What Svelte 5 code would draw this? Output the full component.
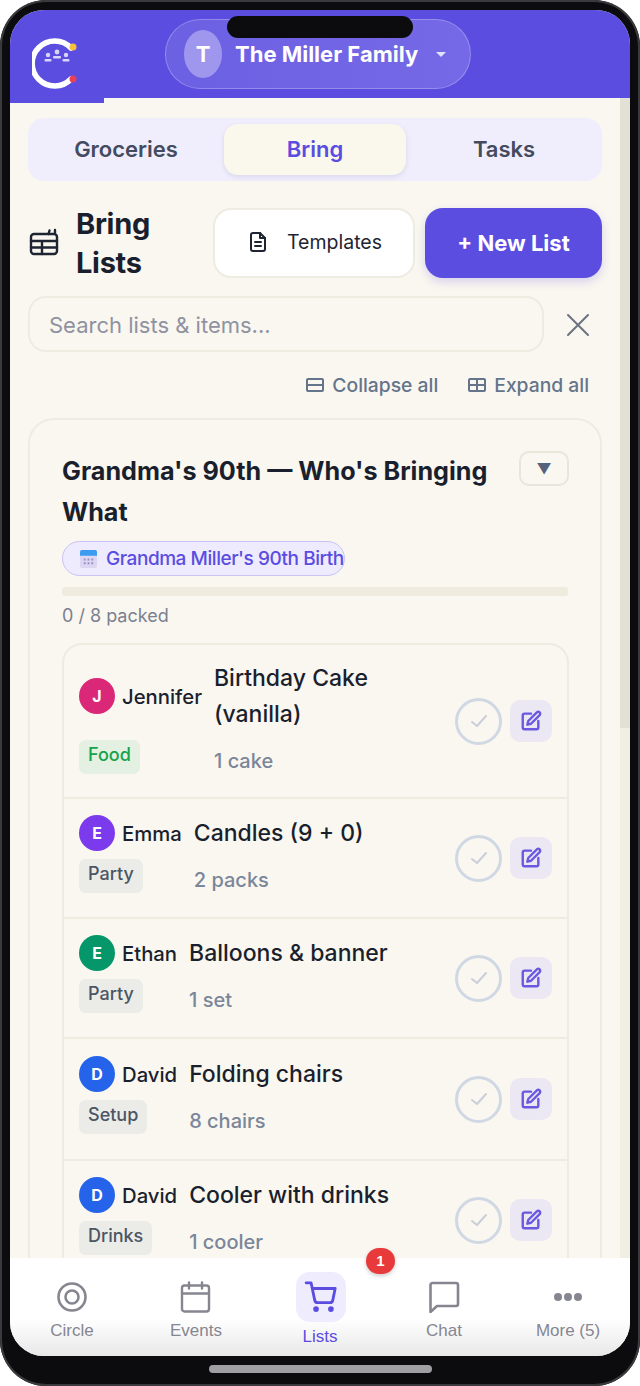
<script>
  const items = [
    { who: 'Jennifer', letter: 'J', color: '#db2777', tag: 'Food', food: true, title: 'Birthday Cake (vanilla)', qty: '1 cake' },
    { who: 'Emma', letter: 'E', color: '#7c3aed', tag: 'Party', title: 'Candles (9 + 0)', qty: '2 packs' },
    { who: 'Ethan', letter: 'E', color: '#059669', tag: 'Party', title: 'Balloons & banner', qty: '1 set' },
    { who: 'David', letter: 'D', color: '#2563eb', tag: 'Setup', title: 'Folding chairs', qty: '8 chairs' },
    { who: 'David', letter: 'D', color: '#2563eb', tag: 'Drinks', title: 'Cooler with drinks', qty: '1 cooler' }
  ];
</script>

<div class="phone">
  <div class="notch"></div>
  <div class="screen">
    <header class="top">
      <svg class="logo" width="48" height="52" viewBox="0 0 48 52" fill="none">
        <path d="M39 10A22.500 22.500 0 1 0 39 41" stroke="#fff" stroke-width="5.500" stroke-linecap="round" transform="translate(0 1)" />
        <circle cx="41" cy="10" r="3.500" fill="#f6c23e" />
        <circle cx="41" cy="42" r="3.500" fill="#e8405a" />
        <g fill="#d9d5f8">
          <circle cx="16" cy="18" r="2.200" /><rect x="12.500" y="22" width="7" height="2.500" rx="1" />
          <circle cx="25" cy="15" r="2.400" /><rect x="21" y="19" width="8" height="2.500" rx="1" />
          <circle cx="34" cy="18" r="2.200" /><rect x="30.500" y="22" width="7" height="2.500" rx="1" />
        </g>
      </svg>
      <button class="family">
        <span class="family-avatar">T</span>
        <span class="family-name">The Miller Family</span>
        <span class="caret"></span>
      </button>
    </header>

    <div class="body">
      <main class="scroll">
        <div class="loadbar"></div>
        <div class="content">
          <nav class="tabs">
            <button class="tab">Groceries</button>
            <button class="tab active">Bring</button>
            <button class="tab">Tasks</button>
          </nav>

          <div class="heading">
            <svg class="list-icon" width="30" height="30" viewBox="0 0 30 30" fill="none" stroke="#1f2433" stroke-width="2.400" stroke-linecap="round" stroke-linejoin="round">
              <rect x="2" y="6" width="26" height="20" rx="3" />
              <path d="M2 13h26M2 19.500h26M13 13v13M20.500 2.500l-1 3.500M26 2v3" />
            </svg>
            <h1>Bring Lists</h1>
            <button class="btn-templates">
              <svg width="20" height="22" viewBox="0 0 20 22" fill="none" stroke="#1f2433" stroke-width="2" stroke-linecap="round" stroke-linejoin="round">
                <path d="M12 2H5a2 2 0 0 0-2 2v14a2 2 0 0 0 2 2h10a2 2 0 0 0 2-2V7z" />
                <path d="M12 2v5h5M7 11h6M7 15h6" />
              </svg>
              Templates
            </button>
            <button class="btn-new">+ New List</button>
          </div>

          <div class="search-row">
            <div class="search">Search lists &amp; items...</div>
            <svg width="24" height="24" viewBox="0 0 24 24" fill="none" stroke="#6b7280" stroke-width="2" stroke-linecap="round">
              <path d="M2 2l20 20M22 2L2 22" />
            </svg>
          </div>

          <div class="actions">
            <span class="act">
              <svg width="18" height="14" viewBox="0 0 18 14" fill="none" stroke="#64748b" stroke-width="2">
                <rect x="1" y="1" width="16" height="12" rx="1" /><path d="M1 7h16" />
              </svg>
              Collapse all
            </span>
            <span class="act">
              <svg width="18" height="14" viewBox="0 0 18 14" fill="none" stroke="#64748b" stroke-width="2">
                <rect x="1" y="1" width="16" height="12" rx="1" /><path d="M1 7h16M9 1v12" />
              </svg>
              Expand all
            </span>
          </div>

          <section class="card">
            <div class="card-head">
              <h2>Grandma's 90th — Who's Bringing What</h2>
              <button class="toggle">▼</button>
            </div>
            <div class="event">
              <svg width="17" height="18" viewBox="0 0 18 19">
                <rect width="18" height="19" rx="2" fill="#ddd6f3" />
                <path d="M0 6V2a2 2 0 0 1 2-2h14a2 2 0 0 1 2 2v4z" fill="#3b9bf0" />
                <path d="M4 9h2v2H4zM8 9h2v2H8zM12 9h2v2h-2zM4 13h2v2H4zM8 13h2v2H8zM12 13h2v2h-2z" fill="#9a90c4" />
              </svg>
              <span class="event-name">Grandma Miller's 90th Birth</span>
            </div>
            <div class="progress"></div>
            <p class="packed">0 / 8 packed</p>

            <div class="rows">
              {#each items as item}
                <div class="row">
                  <div class="info">
                    <div class="person">
                      <span class="avatar" style="background:{item.color}">{item.letter}</span>
                      <span class="who">{item.who}</span>
                    </div>
                    <div class="title">{item.title}</div>
                    <div><span class="tag" class:food={item.food}>{item.tag}</span></div>
                    <div class="qty">{item.qty}</div>
                  </div>
                  <button class="check" aria-label="Mark packed">
                    <svg width="20" height="16" viewBox="0 0 20 16" fill="none" stroke="#c9ced8" stroke-width="2" stroke-linecap="round" stroke-linejoin="round">
                      <path d="M3 9l5 4 9-10" />
                    </svg>
                  </button>
                  <button class="edit" aria-label="Edit">
                    <svg width="22" height="22" viewBox="0 0 24 24" fill="none" stroke="#6a58e0" stroke-width="2.600" stroke-linecap="round" stroke-linejoin="round">
                      <path d="M12 4H5a2 2 0 0 0-2 2v13a2 2 0 0 0 2 2h13a2 2 0 0 0 2-2v-7" />
                      <path d="M18.400 2.600a2.100 2.100 0 0 1 3 3L12 15l-4 1 1-4z" />
                    </svg>
                  </button>
                </div>
              {/each}
            </div>
          </section>
        </div>
      </main>
      <div class="scrollbar"><div class="thumb"></div></div>
    </div>

    <footer class="nav">
      <div class="nav-item">
        <svg width="32" height="32" viewBox="0 0 32 32" fill="none" stroke="#868691" stroke-width="2.600">
          <circle cx="16" cy="16" r="13.500" /><circle cx="16" cy="16" r="6.500" />
        </svg>
        <span>Circle</span>
      </div>
      <div class="nav-item">
        <svg width="32" height="32" viewBox="0 0 32 32" fill="none" stroke="#868691" stroke-width="2.400" stroke-linecap="round" stroke-linejoin="round">
          <rect x="2" y="4.500" width="27" height="26" rx="2.500" /><path d="M2 12.500h27M9 1.500v6M22 1.500v6" />
        </svg>
        <span>Events</span>
      </div>
      <div class="nav-item current">
        <div class="cart-box">
          <svg width="34" height="34" viewBox="0 0 24 24" fill="none" stroke="#5a4de0" stroke-width="2" stroke-linecap="round" stroke-linejoin="round">
            <circle cx="8.500" cy="20.500" r="1" fill="#5a4de0" /><circle cx="19" cy="20.500" r="1" fill="#5a4de0" />
            <path d="M1.500 2h3.500l2.600 12.400a2 2 0 0 0 2 1.600h8.700a2 2 0 0 0 2-1.600L22 6H6" />
          </svg>
        </div>
        <span>Lists</span>
        <b class="badge">1</b>
      </div>
      <div class="nav-item">
        <svg width="32" height="32" viewBox="0 0 32 32" fill="none" stroke="#868691" stroke-width="2.600" stroke-linejoin="round">
          <path d="M30 23a2 2 0 0 1-2 2H9l-6.500 6V4a2 2 0 0 1 2-2H28a2 2 0 0 1 2 2z" />
        </svg>
        <span>Chat</span>
      </div>
      <div class="nav-item">
        <svg width="32" height="32" viewBox="0 0 32 32" fill="#868691">
          <circle cx="6" cy="16" r="4" /><circle cx="16" cy="16" r="4" /><circle cx="26" cy="16" r="4" />
        </svg>
        <span>More (5)</span>
      </div>
    </footer>
  </div>
  <div class="home"></div>
</div>

<style>
  :global(body) {
    background: #fff;
  }

  .phone {
    position: relative;
    box-sizing: border-box;
    width: 640px;
    height: 1386px;
    padding: 10px 10px 30px;
    background: #0c0c0f;
    border-radius: 46px;
    box-shadow: inset 0 0 0 2px #3a3a3e;
    font-family: Inter, "Liberation Sans", sans-serif;
    color: #1a1f2e;
  }

  .notch {
    position: absolute;
    top: 16px;
    left: 227px;
    width: 186px;
    height: 22px;
    border-radius: 11px;
    background: #0c0c0f;
    z-index: 3;
  }

  .home {
    position: absolute;
    left: 209px;
    bottom: 13px;
    width: 223px;
    height: 8px;
    border-radius: 4px;
    background: #a0a0a4;
  }

  .screen {
    display: flex;
    flex-direction: column;
    height: 1346px;
    border-radius: 34px;
    overflow: hidden;
    background: #faf7f0;
  }

  button {
    font-family: inherit;
    cursor: pointer;
  }

  .top {
    flex: none;
    display: flex;
    align-items: center;
    height: 88px;
    padding: 0 0 0 22px;
    box-sizing: border-box;
    background: #5a4de0;
  }

  .logo {
    margin-top: 18px;
  }

  .family {
    display: flex;
    align-items: center;
    box-sizing: border-box;
    width: 306px;
    height: 70px;
    margin: 0 0 0 85px;
    padding: 0 0 0 18px;
    border: 1.5px solid rgba(255, 255, 255, 0.25);
    border-radius: 35px;
    background: linear-gradient(90deg, #6c60e3, #7569e7);
    color: #fff;
  }

  .family-avatar {
    display: flex;
    align-items: center;
    justify-content: center;
    width: 38px;
    height: 48px;
    border-radius: 50%;
    background: #9f97ee;
    font-size: 22px;
    font-weight: 700;
  }

  .family-name {
    margin-left: 13px;
    font-size: 22px;
    font-weight: 700;
    white-space: nowrap;
  }

  .caret {
    margin-left: 18px;
    border-left: 5px solid transparent;
    border-right: 5px solid transparent;
    border-top: 5px solid #e4e1fa;
  }

  .body {
    flex: 1;
    display: flex;
    min-height: 0;
  }

  .scroll {
    flex: 1;
    min-width: 0;
    overflow: hidden;
  }

  .loadbar {
    width: 94px;
    height: 5px;
    background: #5a4de0;
  }

  .content {
    padding: 15px 18px 0;
  }

  .scrollbar {
    flex: none;
    width: 10px;
    background: #f1efe3;
  }

  .thumb {
    height: 630px;
    background: #e3e1d6;
  }

  .tabs {
    display: grid;
    grid-template-columns: 1fr 182px 1fr;
    gap: 6px;
    height: 63px;
    box-sizing: border-box;
    padding: 6px;
    border-radius: 16px;
    background: #f0eefc;
  }

  .tab {
    padding: 0 0 2px;
    border: 0;
    border-radius: 14px;
    background: none;
    font-size: 22px;
    font-weight: 600;
    color: #454b5e;
  }

  .tab.active {
    background: #faf7ec;
    color: #5a4de0;
    box-shadow: 0 2px 5px rgba(60, 50, 120, 0.12);
  }

  .heading {
    display: flex;
    align-items: center;
    gap: 10px;
    height: 78px;
    margin-top: 23px;
  }

  .list-icon {
    flex: none;
    margin: 0 7px 0 1px;
  }

  h1 {
    flex: 1;
    min-width: 0;
    margin: 0;
    font-size: 29px;
    line-height: 39px;
    font-weight: 700;
    letter-spacing: -0.3px;
  }

  .btn-templates {
    flex: none;
    display: flex;
    align-items: center;
    justify-content: center;
    gap: 19px;
    width: 202px;
    height: 70px;
    padding: 0 0 2px 2px;
    border: 2px solid #eeebe0;
    border-radius: 18px;
    background: #fff;
    font-size: 19.5px;
    color: #1f2433;
  }

  .btn-new {
    flex: none;
    width: 177px;
    height: 70px;
    border: 0;
    border-radius: 18px;
    background: #5a4de0;
    box-shadow: 0 4px 10px rgba(90, 77, 224, 0.22);
    font-size: 22px;
    font-weight: 700;
    color: #fff;
  }

  .search-row {
    display: flex;
    align-items: center;
    gap: 22px;
    margin-top: 14px;
  }

  .search {
    flex: 1;
    height: 56px;
    box-sizing: border-box;
    padding: 0 19px;
    border: 2px solid #eeebe0;
    border-radius: 18px;
    font-size: 22px;
    line-height: 54px;
    color: #8f92a1;
  }

  .search-row svg {
    flex: none;
    margin-right: 12px;
    transform: translateY(1px);
  }

  .actions {
    display: flex;
    justify-content: flex-end;
    gap: 30px;
    height: 24px;
    margin-top: 21px;
    padding-right: 13px;
  }

  .act {
    display: flex;
    align-items: center;
    gap: 8px;
    font-size: 19.3px;
    font-weight: 500;
    color: #64748b;
  }

  .card {
    box-sizing: border-box;
    margin-top: 21px;
    padding: 31px 32px 32px;
    border: 2px solid #eeebe0;
    border-radius: 26px;
    background: #faf7f0;
  }

  .card-head {
    display: flex;
    align-items: flex-start;
    gap: 20px;
  }

  h2 {
    flex: 1;
    margin: 0;
    font-size: 25.2px;
    line-height: 41px;
    font-weight: 700;
  }

  .toggle {
    flex: none;
    width: 50px;
    height: 35px;
    margin: 0 -1px 0 0;
    padding: 0;
    border: 2px solid #e8e5da;
    border-radius: 10px;
    background: none;
    font-size: 15px;
    color: #55627a;
  }

  .event {
    display: flex;
    align-items: center;
    gap: 9px;
    box-sizing: border-box;
    width: 283px;
    height: 35px;
    margin-top: 8px;
    padding-left: 17px;
    border: 1.5px solid #c9c2f6;
    border-radius: 18px;
    background: #eeebfe;
  }

  .event svg {
    flex: none;
  }

  .event-name {
    font-size: 19px;
    font-weight: 500;
    letter-spacing: -0.45px;
    color: #5a4de0;
    white-space: nowrap;
  }

  .progress {
    height: 9px;
    margin-top: 11px;
    border-radius: 2px;
    background: #efecdf;
  }

  .packed {
    margin: 9px 0 0;
    font-size: 18px;
    line-height: 22px;
    color: #7b8090;
  }

  .rows {
    margin-top: 16px;
    margin-right: -1px;
    border: 2px solid #eeebe0;
    border-radius: 20px;
  }

  .row {
    display: flex;
    align-items: center;
    gap: 8px;
    padding: 16px 15px 23px;
    border-bottom: 2px solid #eeebe0;
  }

  .row:first-child {
    padding-top: 15px;
    padding-bottom: 22px;
  }

  /* this row sits a touch taller in the reference */
  .row:nth-child(4) {
    padding-top: 17px;
    padding-bottom: 24px;
  }

  .row:last-child {
    border-bottom: 0;
  }

  .info {
    flex: 1;
    min-width: 0;
    display: grid;
    grid-template-columns: auto 1fr;
    column-gap: 12px;
    row-gap: 8px;
  }

  .person {
    display: flex;
    align-items: center;
    gap: 7px;
  }

  .avatar {
    display: flex;
    align-items: center;
    justify-content: center;
    flex: none;
    width: 36px;
    height: 36px;
    border-radius: 50%;
    font-size: 16px;
    font-weight: 700;
    color: #fff;
  }

  .who {
    font-size: 20.3px;
    font-weight: 500;
  }

  .title {
    font-size: 23px;
    line-height: 36px;
    font-weight: 500;
  }

  .tag {
    display: inline-block;
    padding: 0 9px;
    height: 34px;
    border-radius: 7px;
    background: #ebebe7;
    font-size: 18px;
    line-height: 30px;
    font-weight: 500;
    color: #4b5563;
  }

  .tag.food {
    background: #e3f0e2;
    color: #16a34a;
  }

  .qty {
    margin-top: 7px;
    font-size: 20px;
    line-height: 28px;
    font-weight: 500;
    color: #7a8699;
  }

  .check {
    flex: none;
    display: flex;
    align-items: center;
    justify-content: center;
    width: 47px;
    height: 47px;
    margin-top: 7px;
    padding: 0;
    border: 3px solid #d0d8e4;
    border-radius: 50%;
    background: none;
  }

  .edit {
    flex: none;
    display: flex;
    align-items: center;
    justify-content: center;
    width: 42px;
    height: 42px;
    margin-top: 7px;
    padding: 0;
    border: 0;
    border-radius: 10px;
    background: #ebe8f4;
  }

  .nav {
    flex: none;
    display: grid;
    grid-template-columns: repeat(5, 1fr);
    height: 98px;
    background: linear-gradient(#fff 62%, #e8e8e8);
  }

  .nav-item {
    position: relative;
    display: flex;
    flex-direction: column;
    align-items: center;
    gap: 8px;
    padding-top: 23px;
    font-family: "Liberation Sans", sans-serif;
    font-size: 17px;
    color: #868691;
  }

  .nav-item.current {
    padding-top: 14px;
    gap: 5px;
    color: #5a4de0;
  }

  .cart-box {
    display: flex;
    align-items: center;
    justify-content: center;
    width: 50px;
    height: 50px;
    margin-left: 1px;
    border-radius: 14px;
    background: #efedfd;
  }

  .badge {
    position: absolute;
    top: -10px;
    left: 108px;
    width: 29px;
    height: 26px;
    border-radius: 13px;
    background: #e8393b;
    box-shadow: 0 2px 4px rgba(0, 0, 0, 0.2);
    font-size: 15px;
    line-height: 26px;
    text-align: center;
    color: #fff;
  }
</style>
